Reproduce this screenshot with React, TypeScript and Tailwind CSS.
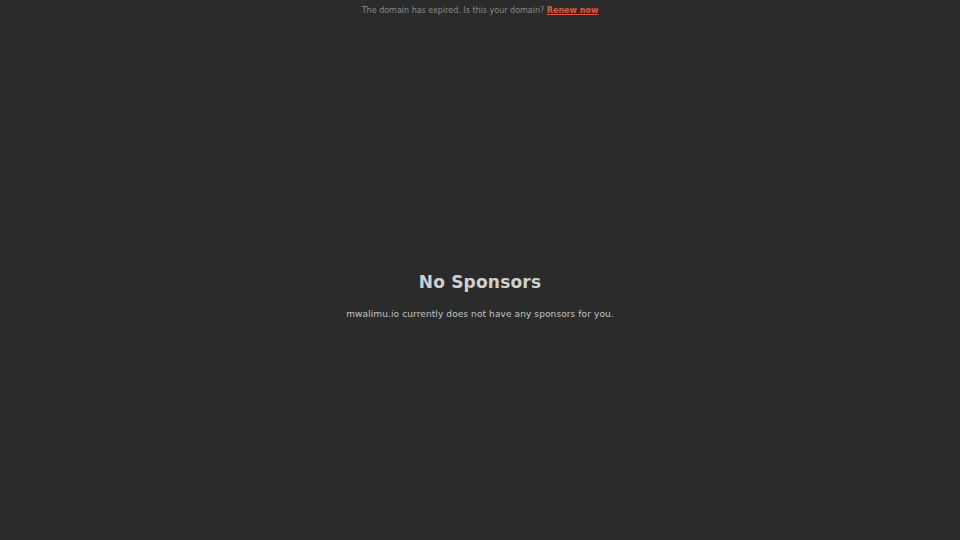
import React from 'react';

const App: React.FC = () => {
  return (
    <div className="flex h-[540px] w-[960px] flex-col bg-[#2b2b2b] font-['DejaVu_Sans',sans-serif]">
      <div className="pt-[5px] text-center text-[8px] leading-[11px] text-[#8a8a8a]">
        The domain has expired. Is this your domain?{' '}
        <a href="#" className="font-bold text-[#e2583e] underline">
          Renew now
        </a>
      </div>
      <div className="flex flex-col items-center pt-[255px]">
        <h1 className="text-[17px] font-bold leading-[22px] tracking-[0.2px] text-[#d0d0d0]">No Sponsors</h1>
        <p className="mt-[15px] text-[9px] leading-[12px] tracking-[0.1px] text-[#c4c4c4]">
          mwalimu.io currently does not have any sponsors for you.
        </p>
      </div>
    </div>
  );
};

export default App;
